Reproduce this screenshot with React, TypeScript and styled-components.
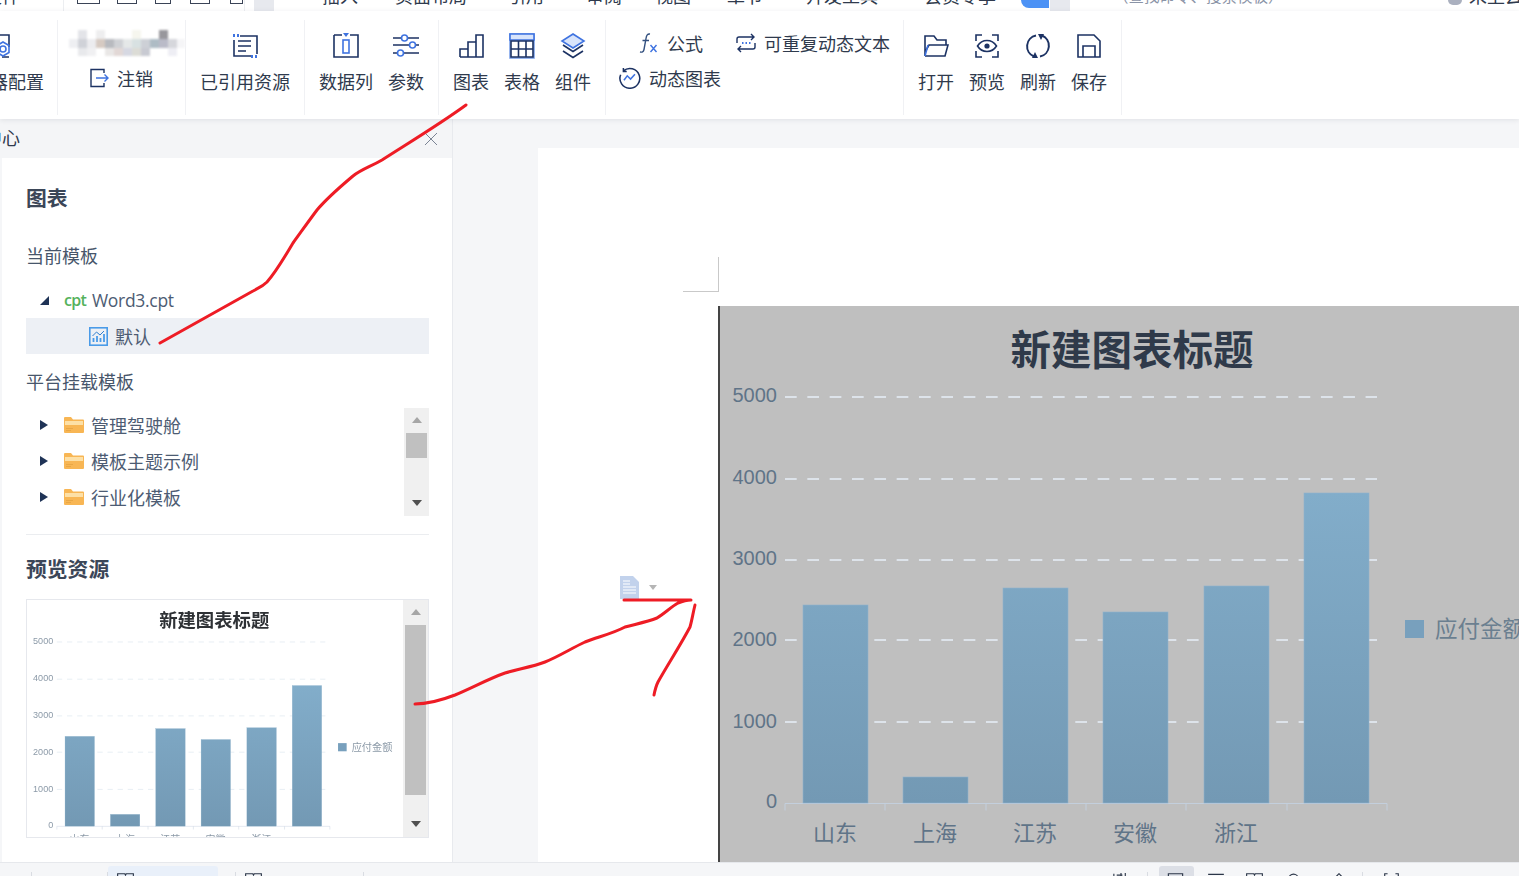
import React from "react";
import styled, { createGlobalStyle } from "styled-components";

const NAVY = "#1c3263";
const BLUE = "#3f73e0";
const CJK = `"Noto Sans CJK SC", "Liberation Sans", sans-serif`;

const Global = createGlobalStyle`
  html, body { margin: 0; padding: 0; background: #fff; }
  body { font-family: ${CJK}; color: #2f3a4d; }
  * { box-sizing: border-box; }
`;

const Shell = styled.div`
  position: relative;
  width: 1519px;
  height: 876px;
  overflow: hidden;
  display: flex;
  flex-direction: column;
`;

/* top menu, cropped by the screenshot */
const MenuStrip = styled.div`
  height: 11px;
  flex: none;
  display: flex;
  overflow: hidden;
  background: #fff;
`;
const MenuGap = styled.div<{ $w: number }>`
  width: ${(p) => p.$w}px;
  flex: none;
`;
const MenuSlot = styled.div<{ $w: number; $indent?: number }>`
  width: ${(p) => p.$w}px;
  flex: none;
  margin-top: -15px;
  font-size: 18px;
  line-height: 20px;
  white-space: nowrap;
  text-indent: ${(p) => p.$indent ?? 0}px;
  color: #2f3a4d;
`;
const MenuFaint = styled(MenuSlot)`
  font-size: 15.5px;
  color: #8a93a6;
`;
const MenuBar = styled.div`
  width: 1px;
  height: 11px;
  flex: none;
  background: #eceef1;
`;
const MenuIcon = styled.div<{ $w: number }>`
  width: ${(p) => p.$w}px;
  flex: none;
`;
const MenuGlyph = styled.span<{ $w: number }>`
  display: block;
  width: ${(p) => p.$w}px;
  height: 4px;
  border: 1.5px solid #3a4356;
  border-top: 0;
`;
const BlueTab = styled.div`
  width: 28px;
  height: 8px;
  flex: none;
  background: #4c92f5;
  border-radius: 0 0 0 10px;
`;
const GreyTab = styled.div`
  width: 20px;
  height: 11px;
  flex: none;
  background: #e7e9ee;
`;
const MenuAvatar = styled.div`
  width: 14px;
  height: 5px;
  margin-left: 6px;
  flex: none;
  background: #aab0bf;
  border-radius: 0 0 8px 8px;
`;

/* ribbon */
const Ribbon = styled.div`
  position: relative;
  z-index: 2;
  height: 108px;
  flex: none;
  display: flex;
  padding: 9px 0 4px;
  background: #fff;
  box-shadow: 0 1px 5px rgba(40, 50, 70, 0.1);
`;
const Group = styled.div<{ $w: number; $pad?: number }>`
  width: ${(p) => p.$w}px;
  flex: none;
  display: flex;
  gap: 15px;
  padding-left: ${(p) => p.$pad ?? 0}px;
  border-right: 1px solid #f0f1f4;
`;
const FirstGroup = styled(Group)`
  margin-left: -46px;
`;
const Item = styled.div`
  display: flex;
  flex-direction: column;
  align-items: center;
  padding-top: 13px;
`;
const WideItem = styled(Item)`
  width: 90px;
`;
const ItemIcon = styled.svg`
  display: block;
  width: 26px;
  height: 26px;
  fill: none;
  stroke: ${NAVY};
  stroke-width: 1.6;
`;
const OffsetIcon = styled(ItemIcon)`
  margin-left: -4px;
`;
const ItemLabel = styled.div`
  margin-top: 10px;
  font-size: 18px;
  line-height: 24px;
  white-space: nowrap;
  color: #2f3a4d;
`;
const UserColumn = styled.div`
  width: 100%;
  display: flex;
  flex-direction: column;
  align-items: flex-start;
  padding: 10px 0 0 11px;
`;
const Mosaic = styled.svg`
  display: block;
  width: 116px;
  height: 26px;
  filter: blur(1.2px);
`;
const Logout = styled.div`
  display: flex;
  align-items: center;
  gap: 8px;
  margin: 10px 0 0 20px;
  font-size: 18px;
  line-height: 24px;
`;
const SmallIcon = styled.svg`
  display: block;
  width: 20px;
  height: 20px;
  flex: none;
  fill: none;
  stroke: ${NAVY};
  stroke-width: 1.4;
`;
const CircleIcon = styled(SmallIcon)`
  width: 22px;
  height: 22px;
`;
const ActionsGrid = styled.div`
  display: grid;
  grid-template-columns: 117px auto;
  grid-template-rows: 24px 24px;
  row-gap: 11px;
  padding: 11px 0 0 14px;
`;
const Action = styled.div<{ $indent?: number }>`
  display: flex;
  align-items: center;
  gap: 8px;
  margin-left: -1px;
  padding-left: ${(p) => p.$indent ?? 0}px;
  font-size: 18px;
  line-height: 24px;
  white-space: nowrap;
`;

/* body */
const Body = styled.div`
  flex: 1;
  min-height: 0;
  display: flex;
  background: #f5f6f8;
`;
const Panel = styled.aside`
  width: 453px;
  flex: none;
  display: flex;
  flex-direction: column;
  border-right: 1px solid #e8eaee;
`;
const PanelHead = styled.div`
  height: 39px;
  flex: none;
  display: flex;
  align-items: center;
  justify-content: space-between;
  padding-right: 14px;
  font-size: 18px;
  background: #f4f5f7;
`;
const PanelHeadTitle = styled.span`
  margin: 0 0 4px -52px;
  white-space: nowrap;
`;
const CloseIcon = styled.svg`
  display: block;
  width: 14px;
  height: 14px;
  stroke: #7b8494;
  stroke-width: 1;
`;
const PanelBody = styled.div`
  flex: 1;
  min-height: 0;
  margin-left: 2px;
  padding: 0 23px 0 24px;
  background: #fff;
  overflow: hidden;
`;
const Heading = styled.div<{ $top: number }>`
  margin-top: ${(p) => p.$top}px;
  font-size: 20.8px;
  line-height: 28px;
  font-weight: 700;
  color: #3b4658;
`;
const SubHeading = styled.div<{ $top: number }>`
  margin-top: ${(p) => p.$top}px;
  font-size: 18px;
  line-height: 28px;
  color: #47566b;
`;
const TreeRow = styled.div<{ $selected?: boolean; $indent: number; $top?: number }>`
  height: 36px;
  display: flex;
  align-items: center;
  margin-top: ${(p) => p.$top ?? 0}px;
  padding-left: ${(p) => p.$indent}px;
  font-size: 18px;
  color: #4d5c73;
  white-space: nowrap;
  background: ${(p) => (p.$selected ? "#edf0f5" : "transparent")};
`;
const Latin = styled.span`
  font-family: "Open Sans", "Liberation Sans", sans-serif;
  font-size: 17.5px;
  letter-spacing: -0.3px;
`;
const CptTag = styled(Latin)`
  width: 28px;
  color: #55b25c;
  font-size: 16px;
  font-weight: 600;
  letter-spacing: -0.7px;
`;
const TriOpen = styled.span`
  width: 0;
  height: 0;
  margin-right: 15px;
  border-style: solid;
  border-width: 0 0 9px 9px;
  border-color: transparent transparent #1f3356 transparent;
`;
const TriClosed = styled.span`
  width: 0;
  height: 0;
  margin-right: 16px;
  border-style: solid;
  border-width: 5.5px 0 5.5px 8px;
  border-color: transparent transparent transparent #1f3356;
`;
const TreeFolder = styled.svg`
  display: block;
  width: 20px;
  height: 18px;
  margin-right: 7px;
  flex: none;
`;
const ChartMini = styled.svg`
  display: block;
  width: 19px;
  height: 19px;
  margin-right: 7px;
  flex: none;
  fill: none;
`;
const ScrollBox = styled.div`
  margin-top: 13px;
  height: 108px;
  display: flex;
  justify-content: space-between;
`;
const TreeList = styled.div`
  margin-top: -1px;
`;
const Scrollbar = styled.div<{ $w: number; $pad: number }>`
  width: ${(p) => p.$w}px;
  flex: none;
  display: flex;
  flex-direction: column;
  align-items: center;
  padding: 0 ${(p) => p.$pad}px;
  background: #f0f0f0;
`;
const ArrowUp = styled.span`
  width: 0;
  height: 0;
  margin-top: 9px;
  flex: none;
  border-style: solid;
  border-width: 0 5.5px 6px 5.5px;
  border-color: transparent transparent #a6a6a6 transparent;
`;
const ArrowDown = styled.span`
  width: 0;
  height: 0;
  flex: none;
  border-style: solid;
  border-width: 6px 5.5px 0 5.5px;
  border-color: #505050 transparent transparent transparent;
`;
const Thumb = styled.div<{ $h: number; $top: number; $bottom: number }>`
  width: 100%;
  height: ${(p) => p.$h}px;
  flex: none;
  margin: ${(p) => p.$top}px 0 ${(p) => p.$bottom}px;
  background: #c0c0c0;
`;
const Divider = styled.div`
  height: 1px;
  margin-top: 18px;
  background: #ebedf0;
`;
const PreviewBox = styled.div`
  margin-top: 17px;
  height: 239px;
  display: flex;
  justify-content: space-between;
  border: 1px solid #e6e8ed;
  overflow: hidden;
`;
const PreviewChart = styled.svg`
  display: block;
  width: 376px;
  height: 237px;
  flex: none;
  filter: blur(0.35px);
`;

/* document */
const DocArea = styled.main`
  flex: 1;
  min-width: 0;
  padding: 29px 0 0 85px;
  overflow: hidden;
`;
const Page = styled.div`
  height: 100%;
  background: #fff;
  overflow: hidden;
`;
const MarginMark = styled.div`
  width: 36px;
  height: 35px;
  margin: 109px 0 14px 145px;
  border-right: 1px solid #c9c9c9;
  border-bottom: 1px solid #c9c9c9;
`;
const DocRow = styled.div`
  display: flex;
`;
const Gutter = styled.div`
  width: 180px;
  flex: none;
  display: flex;
  align-items: flex-start;
  gap: 9px;
  padding: 270px 0 0 82px;
`;
const DocIcon = styled.svg`
  display: block;
  width: 20px;
  height: 23px;
  flex: none;
`;
const Caret = styled.span`
  width: 0;
  height: 0;
  margin-top: 9px;
  border-style: solid;
  border-width: 5px 4px 0 4px;
  border-color: #b5b5b5 transparent transparent transparent;
`;
const BigChart = styled.svg`
  display: block;
  width: 801px;
  height: 556px;
  flex: none;
  background: #bfbfbf;
  border-left: 2px solid #444;
`;

/* status */
const StatusBar = styled.footer`
  height: 14px;
  flex: none;
  display: flex;
  background: #f5f6f8;
  border-top: 1px solid #e6e8ec;
  overflow: hidden;
`;
const StatusGap = styled.div<{ $w: number }>`
  width: ${(p) => p.$w}px;
  flex: none;
`;
const StatusLine = styled.div`
  width: 1px;
  height: 4px;
  margin-top: 9px;
  flex: none;
  background: #d9dce2;
`;
const StatusTab = styled.div<{ $w: number; $on: string }>`
  width: ${(p) => p.$w}px;
  flex: none;
  display: flex;
  margin-top: 3px;
  padding: 7px 0 0 6px;
  background: ${(p) => p.$on};
  border-radius: 3px 3px 0 0;
`;
const StatusIcon = styled.svg<{ $w: number }>`
  display: block;
  width: ${(p) => p.$w}px;
  height: 10px;
  margin-top: 10px;
  flex: none;
  fill: none;
  stroke: #2b3648;
  stroke-width: 1.6;
`;
const TabIcon = styled(StatusIcon)`
  margin-top: 0;
`;

const Overlay = styled.svg`
  position: absolute;
  left: 0;
  top: 0;
  width: 1519px;
  height: 876px;
  z-index: 5;
  pointer-events: none;
  fill: none;
  stroke: #ee1c25;
  stroke-width: 3;
  stroke-linecap: round;
  stroke-linejoin: round;
`;

const bars = [
  { x: 803, top: 605, name: "山东" },
  { x: 903, top: 777, name: "上海" },
  { x: 1003, top: 588, name: "江苏" },
  { x: 1103, top: 612, name: "安徽" },
  { x: 1204, top: 586, name: "浙江" },
  { x: 1304, top: 493, name: "" },
];
const gridRows = [
  { label: "5000", line: 397, text: 402 },
  { label: "4000", line: 479, text: 484 },
  { label: "3000", line: 560, text: 565 },
  { label: "2000", line: 640, text: 646 },
  { label: "1000", line: 722, text: 728 },
];

function ChartArt({ id, grid, axisText, title, legend }: { id: string; grid: string; axisText: string; title: string; legend: string }) {
  return (
    <>
      <defs>
        <linearGradient id={id} x1="0" y1="493" x2="0" y2="803" gradientUnits="userSpaceOnUse">
          <stop offset="0" stopColor="#82adca" />
          <stop offset="1" stopColor="#7399b4" />
        </linearGradient>
      </defs>
      {gridRows.map((r) => (
        <g key={r.label}>
          <line x1="785" x2="1377" y1={r.line} y2={r.line} stroke={grid} strokeWidth="2" strokeDasharray="11.7 10.63" />
          <text x="777" y={r.text} textAnchor="end" fontFamily="Liberation Sans, sans-serif" fontSize="20" fill={axisText}>
            {r.label}
          </text>
        </g>
      ))}
      <text x="777" y="808" textAnchor="end" fontFamily="Liberation Sans, sans-serif" fontSize="20" fill={axisText}>
        0
      </text>
      <path d="M785 803.5H1387M785 803.5v7M885 803.5v7M986 803.5v7M1086 803.5v7M1186 803.5v7M1287 803.5v7M1387 803.5v7" stroke="#c3cfdd" fill="none" />
      {bars.map((b) => (
        <g key={b.x}>
          <rect x={b.x} y={b.top} width="65" height={803 - b.top} fill={`url(#${id})`} stroke="#8fb3cc" strokeWidth="0.6" />
          {b.name && (
            <text x={b.x + 32} y="841" textAnchor="middle" fontFamily={CJK} fontSize="22" fill={axisText}>
              {b.name}
            </text>
          )}
        </g>
      ))}
      <text x="1132" y="365" textAnchor="middle" fontFamily={CJK} fontSize="40.5" fontWeight="700" fill={title}>
        新建图表标题
      </text>
      <rect x="1405" y="620" width="19" height="18" fill="#78a0bd" />
      <text x="1435" y="637" fontFamily={CJK} fontSize="22.5" fill={legend}>
        应付金额
      </text>
    </>
  );
}

const folderTree = ["管理驾驶舱", "模板主题示例", "行业化模板"];

function Folder() {
  return (
    <TreeFolder viewBox="0 0 20 18">
      <path d="M0 2a1 1 0 0 1 1-1h6l2 2.5h10a1 1 0 0 1 1 1V16a1 1 0 0 1-1 1H1a1 1 0 0 1-1-1z" fill="#f8b654" />
      <path d="M1 5h18v4H1z" fill="#fde0a6" />
      <path d="M2 12h7v1H2zM2 14h5v1H2z" fill="#e9a745" />
    </TreeFolder>
  );
}

const mosaic: [number, number, string][] = [
  [9, 0, "#e3e4e8"], [27, 0, "#eeeeef"], [63, 0, "#f6f6ee"], [90, 0, "#98979c"],
  [0, 9, "#eeeff2"], [9, 9, "#d0d2d8"], [18, 9, "#ececef"], [27, 9, "#d6cac2"], [36, 9, "#b8babf"], [45, 9, "#cfd1d5"], [54, 9, "#e5e8e8"], [63, 9, "#d8e1e2"], [72, 9, "#cdd0d6"], [81, 9, "#aebcc5"], [90, 9, "#babbc8"], [99, 9, "#d6d7dc"], [108, 9, "#f5f5f7"],
  [9, 18, "#e8e9ec"], [18, 18, "#f0f0f2"], [36, 18, "#e9e7e6"], [45, 18, "#e2d8d6"], [54, 18, "#d6d8e2"], [63, 18, "#dcdcd6"], [72, 18, "#c8cad2"], [99, 18, "#eeeef4"],
];

const BOOK = "M1 1h10l1 2 1-2h10v14H1z";

export default function App() {
  return (
    <Shell>
      <Global />
      <MenuStrip>
        <MenuSlot $w={63} $indent={-16}>文件</MenuSlot>
        <MenuBar />
        <MenuGap $w={13} />
        <MenuIcon $w={40}><MenuGlyph $w={23} /></MenuIcon>
        <MenuIcon $w={38}><MenuGlyph $w={20} /></MenuIcon>
        <MenuIcon $w={35}><MenuGlyph $w={16} /></MenuIcon>
        <MenuIcon $w={40}><MenuGlyph $w={20} /></MenuIcon>
        <MenuIcon $w={14}><MenuGlyph $w={13} /></MenuIcon>
        <MenuBar />
        <MenuGap $w={9} />
        <GreyTab />
        <MenuGap $w={48} />
        <MenuSlot $w={73}>插入</MenuSlot>
        <MenuSlot $w={113}>页面布局</MenuSlot>
        <MenuSlot $w={78}>引用</MenuSlot>
        <MenuSlot $w={69}>审阅</MenuSlot>
        <MenuSlot $w={72}>视图</MenuSlot>
        <MenuSlot $w={79}>章节</MenuSlot>
        <MenuSlot $w={118}>开发工具</MenuSlot>
        <MenuSlot $w={97}>会员专享</MenuSlot>
        <BlueTab />
        <MenuGap $w={1} />
        <GreyTab />
        <MenuGap $w={43} />
        <MenuFaint $w={329}>（查找命令、搜索模板）</MenuFaint>
        <MenuAvatar />
        <MenuGap $w={7} />
        <MenuSlot $w={50}>未上云</MenuSlot>
      </MenuStrip>

      <Ribbon>
        <FirstGroup $w={104}>
          <WideItem>
            <OffsetIcon viewBox="0 0 26 26">
              <path d="M3 2h22v12M25 24H18" />
              <circle cx="19" cy="16" r="3" stroke={BLUE} />
              <path d="M19 9l6 3.500v7L19 23l-6-3.500v-7z" stroke={BLUE} />
            </OffsetIcon>
            <ItemLabel>服务器配置</ItemLabel>
          </WideItem>
        </FirstGroup>
        <Group $w={128}>
          <UserColumn>
            <Mosaic viewBox="0 0 116 26">
              {mosaic.map(([x, y, c]) => (
                <rect key={`${x}-${y}`} x={x} y={y} width="9" height="9" fill={c} />
              ))}
            </Mosaic>
            <Logout>
              <SmallIcon viewBox="0 0 20 20">
                <path d="M15 5V1.500H2v17h13V15" />
                <path d="M7 10h12M15.500 6.500L19 10l-3.500 3.500" stroke={BLUE} />
              </SmallIcon>
              注销
            </Logout>
          </UserColumn>
        </Group>
        <Group $w={119} $pad={14}>
          <Item>
            <ItemIcon viewBox="0 0 26 26">
              <path d="M8 3h17v18M20 23H2V7" />
              <path d="M6 8h13M6 13h13M6 18h8" />
              <path d="M1 1h2v3H1zM5 1h2v3H5z" fill={BLUE} stroke="none" />
              <path d="M19 22h2v3h-2zM23 22h2v3h-2z" fill={BLUE} stroke="none" />
            </ItemIcon>
            <ItemLabel>已引用资源</ItemLabel>
          </Item>
        </Group>
        <Group $w={134} $pad={14}>
          <Item>
            <ItemIcon viewBox="0 0 26 26">
              <path d="M1 2h8M17 2h8v22H1V2" />
              <rect x="10" y="7" width="6" height="13" stroke={BLUE} />
              <path d="M10 0h6l-3 4z" fill={BLUE} stroke="none" />
            </ItemIcon>
            <ItemLabel>数据列</ItemLabel>
          </Item>
          <Item>
            <ItemIcon viewBox="0 0 26 26">
              <path d="M0 5h8M15 5h11M0 12h16M23 12h3M0 20h4M11 20h15" />
              <circle cx="11.500" cy="5" r="3" stroke={BLUE} />
              <circle cx="19.500" cy="12" r="3" stroke={BLUE} />
              <circle cx="7.500" cy="20" r="3" stroke={BLUE} />
            </ItemIcon>
            <ItemLabel>参数</ItemLabel>
          </Item>
        </Group>
        <Group $w={167} $pad={14}>
          <Item>
            <ItemIcon viewBox="0 0 26 26">
              <path d="M2 24v-8h8M10 24V9h8M18 24V2h7v22zM2 24h23M10 16v8" />
            </ItemIcon>
            <ItemLabel>图表</ItemLabel>
          </Item>
          <Item>
            <ItemIcon viewBox="0 0 26 26">
              <rect x="1" y="1" width="24" height="24" stroke="#7ea3ea" />
              <path d="M1 1h24v6H1z" fill="#d8e4fb" stroke={BLUE} />
              <path d="M2 8h22v16H2zM9.500 8v16M17 8v16M2 16h22" />
            </ItemIcon>
            <ItemLabel>表格</ItemLabel>
          </Item>
          <Item>
            <ItemIcon viewBox="0 0 26 26">
              <path d="M13 1l11 7-11 7L2 8z" fill="#d8e4fb" stroke={BLUE} />
              <path d="M3 12l10 6.500L23 12M3 18l10 6.500L23 18" />
            </ItemIcon>
            <ItemLabel>组件</ItemLabel>
          </Item>
        </Group>
        <Group $w={298}>
          <ActionsGrid>
            <Action $indent={20}>
              <SmallIcon viewBox="0 0 20 20">
                <path d="M11 1C8.500 0.500 7.500 2.500 7 5.500L5 16.500C4.500 19 3 19.500 1 19M3.500 7.500H10" stroke="#33507f" />
                <path d="M11.500 12l6 7M17.500 12l-6 7" stroke={BLUE} />
              </SmallIcon>
              公式
            </Action>
            <Action>
              <SmallIcon viewBox="0 0 20 20">
                <path d="M1 10V6a2 2 0 0 1 2-2h15M15 1l3 3-3 3M19 10v4a2 2 0 0 1-2 2H2M5 13l-3 3 3 3" />
                <path d="M6 10h1.500M9.500 10H11M13 10h1.500" stroke={BLUE} strokeWidth="1.800" />
              </SmallIcon>
              可重复动态文本
            </Action>
            <Action>
              <CircleIcon viewBox="0 0 20 20">
                <path d="M4 3.500A9 9 0 1 1 1.500 7M4 1v3h3" />
                <path d="M4.500 12l3-4 3 3 4-4.500" stroke={BLUE} />
              </CircleIcon>
              动态图表
            </Action>
          </ActionsGrid>
        </Group>
        <Group $w={218} $pad={14}>
          <Item>
            <ItemIcon viewBox="0 0 26 26">
              <path d="M2 23V3h9l3 4h9v5M2 23h20l3-11H6l-4 7" />
              <path d="M2 23l3-11" stroke={BLUE} />
            </ItemIcon>
            <ItemLabel>打开</ItemLabel>
          </Item>
          <Item>
            <ItemIcon viewBox="0 0 26 26">
              <path d="M2 8V2h6M18 2h6v6M24 18v6h-6M8 24H2v-6" />
              <path d="M3.500 13C6 9 9.500 7.500 13 7.500S20 9 22.500 13C20 17 16.500 18.500 13 18.500S6 17 3.500 13z" />
              <circle cx="13" cy="13" r="2.600" fill={NAVY} stroke="none" />
            </ItemIcon>
            <ItemLabel>预览</ItemLabel>
          </Item>
          <Item>
            <ItemIcon viewBox="0 0 26 26">
              <path d="M11 2.500A11 11 0 0 0 9 23.500M15 23.500A11 11 0 0 0 17 2.500" strokeWidth="2" />
              <path d="M10 19l3 6-6 0zM16 7l-3-6h6z" fill={NAVY} stroke="none" />
            </ItemIcon>
            <ItemLabel>刷新</ItemLabel>
          </Item>
          <Item>
            <ItemIcon viewBox="0 0 26 26">
              <path d="M2 2h16l6 6v16H2zM7 24V13h12v11" />
            </ItemIcon>
            <ItemLabel>保存</ItemLabel>
          </Item>
        </Group>
      </Ribbon>

      <Body>
        <Panel>
          <PanelHead>
            <PanelHeadTitle>资源中心</PanelHeadTitle>
            <CloseIcon viewBox="0 0 14 14">
              <path d="M1 1l12 12M13 1L1 13" />
            </CloseIcon>
          </PanelHead>
          <PanelBody>
            <Heading $top={25}>图表</Heading>
            <SubHeading $top={30}>当前模板</SubHeading>
            <TreeRow $indent={14} $top={13}>
              <TriOpen />
              <CptTag>cpt</CptTag>
              <Latin>Word3.cpt</Latin>
            </TreeRow>
            <TreeRow $indent={63} $selected>
              <ChartMini viewBox="0 0 19 19">
                <rect x="0.800" y="0.800" width="17.400" height="17.400" stroke="#4a9be8" strokeWidth="1.600" />
                <path d="M4.500 15V11M8 15V9M11.500 15v-4M15 15V7" stroke="#4a9be8" strokeWidth="1.800" />
                <path d="M3.500 9l4-4 3.500 3 4-4" stroke="#2f7fd0" />
              </ChartMini>
              默认
            </TreeRow>
            <SubHeading $top={13}>平台挂载模板</SubHeading>
            <ScrollBox>
              <TreeList>
                {folderTree.map((name) => (
                  <TreeRow key={name} $indent={14}>
                    <TriClosed />
                    <Folder />
                    {name}
                  </TreeRow>
                ))}
              </TreeList>
              <Scrollbar $w={25} $pad={2}>
                <ArrowUp />
                <Thumb $h={25} $top={10} $bottom={42} />
                <ArrowDown />
              </Scrollbar>
            </ScrollBox>
            <Divider />
            <Heading $top={19}>预览资源</Heading>
            <PreviewBox>
              <PreviewChart viewBox="719.2 304.4 829 522.6">
                <ChartArt id="barSmall" grid="#e6edf3" axisText="#8c9aa8" title="#2e3135" legend="#8c9aa8" />
              </PreviewChart>
              <Scrollbar $w={25} $pad={2}>
                <ArrowUp />
                <Thumb $h={170} $top={10} $bottom={26} />
                <ArrowDown />
              </Scrollbar>
            </PreviewBox>
          </PanelBody>
        </Panel>
        <DocArea>
          <Page>
            <MarginMark />
            <DocRow>
              <Gutter>
                <DocIcon viewBox="0 0 20 23">
                  <path d="M0 0h13l6 6v17H0z" fill="#c2d2ec" />
                  <path d="M3 5h7M3 8h7M3 11h13M3 14h13M3 17h13" stroke="#fff" strokeWidth="1.200" />
                </DocIcon>
                <Caret />
              </Gutter>
              <BigChart viewBox="720 306 799 556">
                <ChartArt id="barBig" grid="#dde3ea" axisText="#5f7488" title="#2f3a4a" legend="#6b7f90" />
              </BigChart>
            </DocRow>
          </Page>
        </DocArea>
      </Body>

      <StatusBar>
        <StatusGap $w={31} />
        <StatusLine />
        <StatusGap $w={75} />
        <StatusLine />
        <StatusTab $w={110} $on="#e9f0fa">
          <TabIcon $w={23} viewBox="0 0 24 14"><path d={BOOK} /></TabIcon>
        </StatusTab>
        <StatusGap $w={17} />
        <StatusLine />
        <StatusGap $w={6} />
        <StatusIcon $w={23} viewBox="0 0 24 14"><path d={BOOK} /></StatusIcon>
        <StatusGap $w={98} />
        <StatusLine />
        <StatusGap $w={746} />
        <StatusIcon $w={22} viewBox="0 0 24 14"><path d="M2 1v5M12 0v6M18 0v6M6 3h8" /></StatusIcon>
        <StatusGap $w={15} />
        <StatusLine />
        <StatusGap $w={11} />
        <StatusTab $w={35} $on="#dcdfe6">
          <TabIcon $w={21} viewBox="0 0 24 14"><path d="M2 1h20v13H2z" /></TabIcon>
        </StatusTab>
        <StatusGap $w={12} />
        <StatusIcon $w={20} viewBox="0 0 24 14"><path d="M1 2h22M1 8h22" /></StatusIcon>
        <StatusGap $w={17} />
        <StatusIcon $w={23} viewBox="0 0 24 14"><path d={BOOK} /></StatusIcon>
        <StatusGap $w={20} />
        <StatusIcon $w={15} viewBox="0 0 16 14"><circle cx="8" cy="8" r="6.500" /></StatusIcon>
        <StatusGap $w={33} />
        <StatusIcon $w={10} viewBox="0 0 10 14"><path d="M1 5l4-4 4 4" /></StatusIcon>
        <StatusGap $w={18} />
        <StatusLine />
        <StatusGap $w={18} />
        <StatusIcon $w={21} viewBox="0 0 21 14"><path d="M5 1H1v8M16 1h4v8" /></StatusIcon>
      </StatusBar>

      <Overlay viewBox="0 0 1519 876">
        <path d="M466 105C440 124 410 142 382 160C370 167 362 169 353 176C340 187 328 197 317 210C308 222 301 232 293 243C284 258 276 272 267 282C262 287 258 288 253 291L160 343" />
        <path d="M415 704C428 704 442 700 455 695C472 688 488 679 505 673C518 669 532 667 545 662C558 657 572 648 585 642C597 637 612 634 625 627C636 624 647 622 657 618C665 613 671 607 678 603C683 601 687 600 691 600L624 600" />
        <path d="M695 605C693 613 692 620 690 627C680 646 668 664 658 682C656 686 655 690 654 695" />
      </Overlay>
    </Shell>
  );
}
